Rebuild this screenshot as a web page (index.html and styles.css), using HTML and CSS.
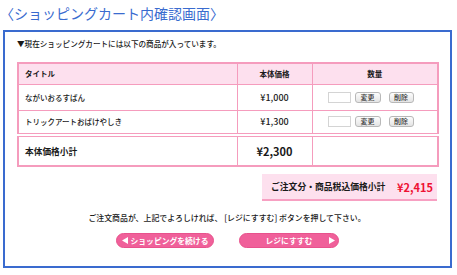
FILE: index.html
```html
<!DOCTYPE html>
<html lang="ja">
<head>
<meta charset="utf-8">
<title>ショッピングカート内確認画面</title>
<link rel="stylesheet" href="styles.css">
</head>
<body>
<h1 class="title">〈ショッピングカート内確認画面〉</h1>
<div class="panel">
  <p class="intro">▼現在ショッピングカートには以下の商品が入っています。</p>
  <table class="cart">
    <colgroup>
      <col class="col-title">
      <col class="col-price">
      <col class="col-qty">
    </colgroup>
    <thead>
      <tr class="head-row">
        <th class="c-title">タイトル</th>
        <th class="c-price">本体価格</th>
        <th class="c-qty">数量</th>
      </tr>
    </thead>
    <tbody>
      <tr class="item item-1">
        <td class="c-title">ながいおるすばん</td>
        <td class="c-price">¥1,000</td>
        <td class="c-qty"><div class="qty"><span class="qty-box"></span><span class="mini-btn">変更</span><span class="mini-btn mini-del">削除</span></div></td>
      </tr>
      <tr class="item item-2">
        <td class="c-title">トリックアートおばけやしき</td>
        <td class="c-price">¥1,300</td>
        <td class="c-qty"><div class="qty"><span class="qty-box"></span><span class="mini-btn">変更</span><span class="mini-btn mini-del">削除</span></div></td>
      </tr>
      <tr class="subtotal">
        <td class="c-title">本体価格小計</td>
        <td class="c-price">¥2,300</td>
        <td class="c-qty"></td>
      </tr>
    </tbody>
  </table>
  <div class="total-row">
    <div class="total">
      <span class="total-label">ご注文分・商品税込価格小計</span>
      <span class="total-price">¥2,415</span>
    </div>
  </div>
  <p class="message">ご注文商品が、上記でよろしければ、 [レジにすすむ] ボタンを押して下さい。</p>
  <div class="actions">
    <a class="pill pill-back" href="#"><svg class="tri" width="6" height="7" viewBox="0 0 6 7"><polygon points="6,0 6,7 0,3.5" fill="#fff"/></svg><span>ショッピングを続ける</span></a>
    <a class="pill pill-next" href="#"><span>レジにすすむ</span><svg class="tri" width="6" height="7" viewBox="0 0 6 7"><polygon points="0,0 0,7 6,3.5" fill="#fff"/></svg></a>
  </div>
</div>
</body>
</html>
```

FILE: styles.css
```css
* { box-sizing: border-box; }

body {
  margin: 0;
  width: 457px;
  height: 275px;
  overflow: hidden;
  background: #fff;
  color: #1a1a1a;
  font-family: "Noto Sans CJK JP", "Noto Sans", sans-serif;
  font-weight: 500;
}

.title {
  margin: 0;
  height: 30px;
  padding-left: 0;
  font-size: 14px;
  font-weight: normal;
  line-height: 26px;
  color: #3a6bcf;
}

.panel {
  margin-left: 3px;
  width: 449px;
  height: 238px;
  border: 2px solid #3a6bcf;
  padding: 6px 13px 0 12px;
}

.intro {
  margin: 0 0 12px;
  font-size: 7.6px;
  line-height: 12px;
}

.cart {
  width: 420px;
  border-collapse: collapse;
  border: 2px solid #f59cbd;
  font-size: 7.5px;
  table-layout: fixed;
}

.col-title { width: 219px; }
.col-price { width: 75px; }
.col-qty { width: 126px; }

.cart th,
.cart td {
  border: 1px solid #f59cbd;
  padding: 0;
  vertical-align: middle;
}

.cart th {
  background: #fde0ee;
  font-weight: bold;
}

.cart .c-title {
  text-align: left;
  padding-left: 6px;
}

.cart .c-price {
  text-align: center;
  font-size: 9px;
}

.cart th.c-price {
  font-size: 7.5px;
}

.cart .c-qty {
  text-align: center;
}

.head-row { height: 21px; }
.item-1 { height: 26px; }
.item-2 { height: 25px; }

.subtotal { height: 31px; }

.cart .subtotal td {
  border-top: 4px double #f59cbd;
  font-weight: bold;
}

.cart .subtotal .c-title { font-size: 8.7px; }
.cart .subtotal .c-price { font-size: 11px; }

.qty {
  display: flex;
  align-items: center;
  padding-left: 15px;
}

.qty-box {
  width: 23px;
  height: 11px;
  border: 1px solid #d4d4d4;
  background: #fff;
  margin-right: 4px;
}

.mini-btn {
  width: 26px;
  height: 11px;
  border: 1px solid #b8b8b8;
  border-radius: 3px;
  background: linear-gradient(#fdfdfd, #e4e4e4);
  font-size: 7px;
  line-height: 9px;
  text-align: center;
  color: #333;
}

.mini-del {
  width: 25px;
  margin-left: 8px;
}

.total-row {
  display: flex;
  justify-content: flex-end;
  margin-top: 7px;
}

.total {
  width: 175px;
  height: 27px;
  background: #fde0ee;
  border-bottom: 2px solid #f7a0c2;
  display: flex;
  align-items: center;
  justify-content: space-between;
  padding: 0 4px 0 9px;
}

.total-label {
  font-size: 8.8px;
  font-weight: bold;
}

.total-price {
  font-size: 11px;
  font-weight: bold;
  color: #ee1133;
}

.message {
  margin: 11px 0 0;
  font-size: 7.9px;
  line-height: 12px;
  text-align: center;
}

.actions {
  display: flex;
  justify-content: center;
  gap: 25px;
  margin-top: 9px;
}

.pill {
  display: flex;
  align-items: center;
  height: 15px;
  border-radius: 8px;
  background: #f0609a;
  border: 1px solid #e8528c;
  color: #fff;
  text-decoration: none;
  font-size: 7.8px;
  font-weight: bold;
}

.pill-back {
  width: 98px;
  padding-left: 5px;
  gap: 3px;
}

.pill-next {
  width: 100px;
  padding-left: 26px;
  gap: 17px;
}
```
